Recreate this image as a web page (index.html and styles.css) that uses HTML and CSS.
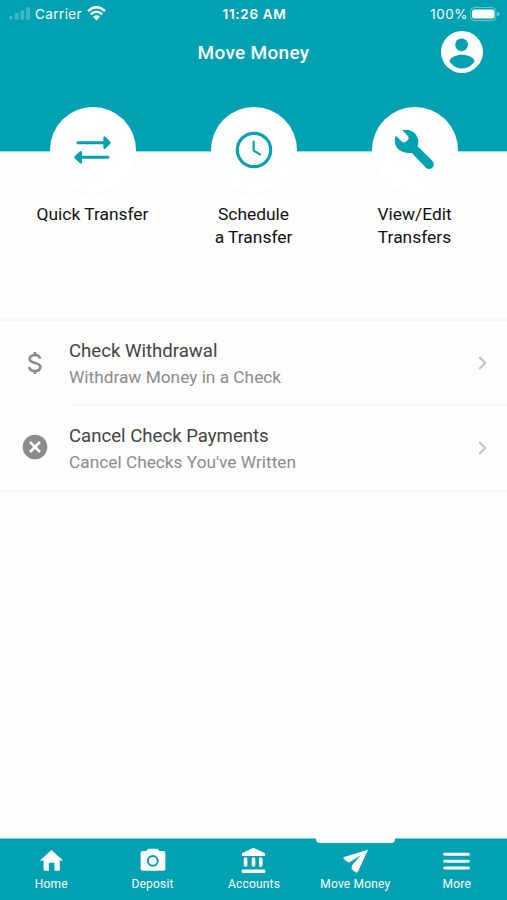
FILE: index.html
```html
<!DOCTYPE html>
<html lang="en">
<head>
  <meta charset="UTF-8" />
  <meta name="viewport" content="width=device-width, initial-scale=1.0" />
  <title>Move Money</title>
  <link rel="stylesheet" href="styles.css">
</head>
<body>
  <header class="header">
    <div class="status-bar">
      <div class="status-left">
        <svg class="signal" viewBox="0 0 22 13">
          <rect x="0" y="9" width="4" height="4" rx="1"/>
          <rect x="6" y="6" width="4" height="7" rx="1"/>
          <rect x="12" y="3" width="4" height="10" rx="1"/>
          <rect x="18" y="0" width="4" height="13" rx="1"/>
        </svg>
        <span class="carrier">Carrier</span>
        <svg class="wifi" viewBox="0 0 54 42">
          <path d="M3 14Q27 -8 51 14M11 23Q27 9 43 23" fill="none" stroke="#fff" stroke-width="7"/>
          <path d="M17 30Q27 22 37 30L27 41z" fill="#fff"/>
        </svg>
      </div>
      <span class="clock">11:26 AM</span>
      <div class="status-right">
        <span class="percent">100%</span>
        <svg class="battery" viewBox="0 0 30 14">
          <rect x=".5" y=".5" width="25.5" height="13" rx="4" fill="none" stroke="#fff" stroke-opacity=".4"/>
          <rect x="2" y="2.500" width="22.5" height="9" rx="2.5" fill="#fff"/>
          <path d="M27.5 5q2 .6 2 2t-2 2z" fill="#fff" fill-opacity=".55"/>
        </svg>
      </div>
    </div>
    <div class="title-bar">
      <h1>Move Money</h1>
      <svg class="profile" viewBox="0 0 42 42">
        <circle cx="21" cy="21" r="21" fill="#fff"/>
        <circle cx="20.6" cy="13.8" r="6.4"/>
        <path d="M8.3 30C12 21.500 30 21.500 33.700 30C28 40 14 40 8.300 30z"/>
      </svg>
    </div>
  </header>

  <div class="actions">
    <a class="action">
      <span class="circle">
        <svg viewBox="156 102 126 126">
          <path d="M174 143H255M184 187H264" fill="none" stroke="#00a1b0" stroke-width="9" stroke-linecap="round"/>
          <path d="M250 127q2-5 6-2l15 15q3 3 0 6l-15 15q-4 3-6-2zM186 171q-2-5-6-2l-16 15q-3 3 0 6l16 15q4 3 6-2z"/>
        </svg>
      </span>
      <span>Quick Transfer</span>
    </a>
    <a class="action">
      <span class="circle">
        <svg viewBox="639 102 126 126">
          <circle cx="702" cy="165" r="50" fill="none" stroke="#00a1b0" stroke-width="9.500"/>
          <path d="M701 140V167L720 178" fill="none" stroke="#00a1b0" stroke-width="6.500" stroke-linecap="round" stroke-linejoin="round"/>
        </svg>
      </span>
      <span>Schedule<br>a Transfer</span>
    </a>
    <a class="action">
      <span class="circle">
        <svg viewBox="403 102 126 126">
          <path d="M428 106C452 98 477 116 476 142Q476 148 474 154L519 199Q527 212 517 219Q507 225 499 218L456 173C436 178 406 165 405 138Q405 128 409 122L427 140Q434 145 440 139L445 134Q449 128 444 122z"/>
        </svg>
      </span>
      <span>View/Edit<br>Transfers</span>
    </a>
  </div>

  <main class="list">
    <a class="row">
      <svg class="row-icon" viewBox="0 0 26 26">
        <path d="M18.200 8.800Q17.300 5 13 5Q7.700 5.200 7.700 9C7.700 14.300 18.400 11.600 18.400 17Q18.200 21 13 21Q7.900 21 7 17M13 2V5M13 21V24" fill="none" stroke="#8b8b8b" stroke-width="2.700"/>
      </svg>
      <div class="row-body">
        <div class="row-text">
          <h2>Check Withdrawal</h2>
          <p>Withdraw Money in a Check</p>
        </div>
        <svg class="chevron" viewBox="0 0 9 14"><path d="M1.200 1L7.200 7L1.200 13"/></svg>
      </div>
    </a>
    <a class="row">
      <svg class="row-icon" viewBox="0 0 26 26">
        <circle cx="13" cy="13" r="12.300" fill="#8b8b8b"/>
        <path d="M8 8L18 18M18 8L8 18" fill="none" stroke="#fff" stroke-width="2.600"/>
      </svg>
      <div class="row-body">
        <div class="row-text">
          <h2>Cancel Check Payments</h2>
          <p>Cancel Checks You've Written</p>
        </div>
        <svg class="chevron" viewBox="0 0 9 14"><path d="M1.200 1L7.200 7L1.200 13"/></svg>
      </div>
    </a>
  </main>

  <nav class="tabs">
    <a class="tab">
      <svg viewBox="113 67 82 82"><path d="M154 76L189 108H179V136Q179 139 176 139H163V115H146V139H133Q130 139 130 136V108H119z"/></svg>
      <span>Home</span>
    </a>
    <a class="tab">
      <svg viewBox="416 67 82 82">
        <path d="M444 72H472L478 79H490Q496 79 496 85V133Q496 139 490 139H427Q421 139 421 133V85Q421 79 427 79H438z"/>
        <circle cx="458" cy="109" r="15" fill="none" stroke="#00a1b0" stroke-width="6"/>
      </svg>
      <span>Deposit</span>
    </a>
    <a class="tab">
      <svg viewBox="-29 67 82 82">
        <path d="M12 69L47 86V94H-23V86z"/>
        <path d="M-12 104V122M12 104V122M34 104V122" stroke="#fff" stroke-width="11" stroke-linecap="round"/>
        <rect x="-24" y="135" width="72" height="11" rx="4"/>
      </svg>
      <span>Accounts</span>
    </a>
    <a class="tab active">
      <svg viewBox="274 67 82 82"><path d="M353 75L278 98Q278 102 282 106L295 115L331 91L304 123L303 134L315 144Q320 147 323 141z"/></svg>
      <span>Move Money</span>
    </a>
    <a class="tab">
      <svg viewBox="578 67 82 82"><path d="M583 89H655M583 110H655M583 131H655" stroke="#fff" stroke-width="9" stroke-linecap="round"/></svg>
      <span>More</span>
    </a>
  </nav>
</body>
</html>
```
FILE: styles.css
```css
* { box-sizing: border-box; }
body {
  margin: 0;
  height: 900px;
  display: flex;
  flex-direction: column;
  font-family: Roboto, "Liberation Sans", sans-serif;
  background-color: #fefefe;
  overflow: hidden;
}
h1, h2, p { margin: 0; }
svg { display: block; flex: none; }
.header {
  height: 152px;
  background-color: #00a1b0;
  border-bottom: 1px solid #a0dde2;
  color: #fff;
}
.status-bar {
  display: grid;
  grid-template-columns: 1fr auto 1fr;
  align-items: center;
  height: 27px;
  padding: 0 7px 0 9px;
  font-family: Inter, sans-serif;
  font-size: 13.5px;
}
.status-left, .status-right { display: flex; align-items: center; }
.status-right { justify-content: flex-end; gap: 2px; }
.signal { width: 21px; height: 13px; fill: rgba(255, 255, 255, 0.25); }
.carrier { margin: 0 5px; letter-spacing: 0.4px; }
.percent { letter-spacing: 0.5px; }
.wifi { width: 19px; height: 15px; }
.clock { font-weight: 600; font-size: 13.5px; letter-spacing: 0.7px; }
.battery { width: 30px; height: 14px; }
.title-bar {
  display: grid;
  grid-template-columns: 1fr auto 1fr;
  align-items: center;
  height: 50px;
  padding-right: 24px;
  padding-left: 24px;
}
.title-bar h1 {
  grid-column: 2;
  font-size: 19px;
  font-weight: 500;
  letter-spacing: 0.3px;
}
.profile {
  width: 42px;
  height: 42px;
  justify-self: end;
  fill: #00a1b0;
}
.actions {
  display: grid;
  grid-template-columns: repeat(3, 1fr);
  height: 211px;
  margin-top: -45px;
  padding: 0 12px;
}
.action {
  display: flex;
  flex-direction: column;
  align-items: center;
  text-align: center;
  font-size: 17.4px;
  line-height: 22.5px;
  color: #111;
}
.circle {
  display: flex;
  align-items: center;
  justify-content: center;
  width: 86px;
  height: 86px;
  margin-bottom: 10px;
  border-radius: 50%;
  background-color: #fff;
  box-shadow: 0 2px 5px rgba(0, 0, 0, 0.02);
}
.circle svg { width: 42px; height: 42px; fill: #00a1b0; }
.list { flex: 1; border-top: 3px solid #f6f6f6; }
.row { display: flex; align-items: center; padding-left: 22px; }
.row-icon { width: 26px; height: 26px; margin-bottom: 2px; }
.row-body {
  flex: 1;
  display: flex;
  align-items: center;
  justify-content: space-between;
  height: 85px;
  margin-left: 21px;
  padding-right: 20px;
  border-bottom: 2px solid #f8f8f8;
}
.row:last-child { border-bottom: 2px solid #f8f8f8; }
.row:last-child .row-body { height: 84px; border-bottom: none; }
.row-text { padding-top: 2px; }
.row-text h2 {
  font-size: 18.6px;
  line-height: 26px;
  font-weight: 400;
  color: #444;
}
.row-text p {
  font-size: 17.3px;
  line-height: 26px;
  color: #8b8b8b;
}
.chevron {
  width: 9px;
  height: 14px;
  fill: none;
  stroke: #c0c0c0;
  stroke-width: 2;
}
.tabs {
  display: grid;
  grid-template-columns: repeat(5, 1fr);
  height: 62px;
  background-color: #00a1b0;
  border-top: 1px solid #70cbd3;
}
.tab {
  position: relative;
  display: flex;
  flex-direction: column;
  align-items: center;
  padding-top: 8px;
  padding-left: 1px;
  font-size: 12px;
  line-height: 18px;
  letter-spacing: 0.2px;
  color: #fff;
}
.tab svg { width: 27px; height: 27px; margin-bottom: 1px; fill: #fff; }
/* white bump over the selected tab */
.tab.active::before {
  content: "";
  position: absolute;
  top: -1px;
  left: 12px;
  width: 79px;
  height: 5px;
  border-radius: 0 0 4px 4px;
  background-color: #fefefe;
}
```
